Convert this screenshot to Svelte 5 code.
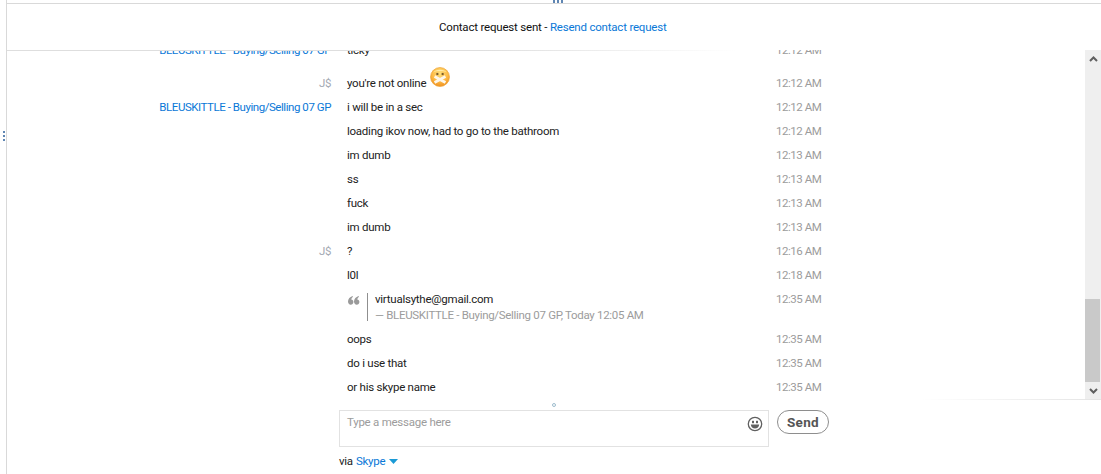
<script>
  const me = 'J$';
  const them = 'BLEUSKITTLE - Buying/Selling 07 GP';
  const rows = [
    { name: them, text: 'ticky', time: '12:12 AM', clip: true },
    { name: me, text: "you're not online", time: '12:12 AM', emo: true },
    { name: them, text: 'i will be in a sec', time: '12:12 AM' },
    { text: 'loading ikov now, had to go to the bathroom', time: '12:12 AM' },
    { text: 'im dumb', time: '12:13 AM' },
    { text: 'ss', time: '12:13 AM' },
    { text: 'fuck', time: '12:13 AM' },
    { text: 'im dumb', time: '12:13 AM' },
    { name: me, text: '?', time: '12:16 AM' },
    { text: 'l0l', time: '12:18 AM' },
    { quote: true, text: 'virtualsythe@gmail.com', by: '— BLEUSKITTLE - Buying/Selling 07 GP, Today 12:05 AM', time: '12:35 AM' },
    { text: 'oops', time: '12:35 AM' },
    { text: 'do i use that', time: '12:35 AM' },
    { text: 'or his skype name', time: '12:35 AM' }
  ];
</script>

<div class="window">
  <div class="grip-left"><i></i><i></i><i></i></div>
  <div class="frame">
    <div class="grip-top"><i></i><i></i><i></i></div>
    <header class="notice">Contact request sent - <a href="#r">Resend contact request</a></header>
    <div class="history">
      <div class="fade-top"></div>
      <div class="list">
        {#each rows as r}
          <div class="row" class:emo-row={r.emo} class:quote-row={r.quote}>
            <div class="name" class:me={r.name === me}>{r.name ?? ''}</div>
            {#if r.quote}
              <div class="body quote">
                <svg class="qmark" width="12" height="9" viewBox="0 0 12 9"><path d="M4.5 0C2 1 0 2.8 0 5.6C0 7.6 1.2 8.8 2.7 8.8C4.2 8.8 5.4 7.6 5.4 6.1C5.4 4.7 4.5 3.7 3.2 3.6C3.4 2.4 4 1.4 5 0.7ZM10.5 0C8 1 6 2.8 6 5.6C6 7.6 7.2 8.8 8.7 8.8C10.2 8.8 11.4 7.6 11.4 6.1C11.4 4.7 10.5 3.7 9.2 3.6C9.4 2.4 10 1.4 11 0.7Z" fill="#9a9a9a"/></svg>
                <div class="qtext">
                  <div class="qline">{r.text}</div>
                  <div class="by">{r.by}</div>
                </div>
              </div>
            {:else}
              <div class="body">{r.text}{#if r.emo}<svg class="emo" width="20" height="20" viewBox="0 0 22 22">
                <defs>
                  <radialGradient id="face" cx="50%" cy="30%" r="70%"><stop offset="0" stop-color="#ffdf7c"/><stop offset="0.6" stop-color="#fdbb45"/><stop offset="1" stop-color="#f0901f"/></radialGradient>
                </defs>
                <circle cx="11" cy="11" r="10.4" fill="url(#face)" stroke="#eda63a" stroke-width="0.8"/>
                <path d="M3.5 6C6 2 16 2 18.5 6C15 4 7 4 3.5 6Z" fill="#fff2b8" opacity="0.8"/>
                <rect x="7" y="6.5" width="2.2" height="2.4" fill="#7a5a28"/><rect x="12.8" y="6.5" width="2.2" height="2.4" fill="#7a5a28"/>
                <path d="M5 10.5L17 17M17 10.5L5 17" stroke="#fdf6ea" stroke-width="3"/>
              </svg>{/if}</div>
            {/if}
            <div class="time">{r.time}</div>
          </div>
        {/each}
      </div>
      <div class="scrollbar">
        <div class="arrow"><svg width="9" height="6" viewBox="0 0 9 6"><path d="M1 5L4.5 1.5L8 5" fill="none" stroke="#5f5f5f" stroke-width="2"/></svg></div>
        <div class="track"><div class="thumb"></div></div>
        <div class="arrow"><svg width="9" height="6" viewBox="0 0 9 6"><path d="M1 1L4.5 4.5L8 1" fill="none" stroke="#5f5f5f" stroke-width="2"/></svg></div>
      </div>
      <div class="fade-bottom"></div>
    </div>
    <div class="resize-row"><span class="dot"></span></div>
    <div class="composer">
      <div class="input">
        <span class="placeholder">Type a message here</span>
        <svg class="smile" width="16" height="16" viewBox="0 0 16 16">
          <circle cx="8" cy="8" r="6.7" fill="none" stroke="#606060" stroke-width="1.3"/>
          <rect x="5" y="4.8" width="2" height="2.4" fill="#606060"/><rect x="9" y="4.8" width="2" height="2.4" fill="#606060"/>
          <path d="M3.8 8.6H12.2C12 11.2 10.2 12.6 8 12.6C5.8 12.6 4 11.2 3.8 8.6Z" fill="#606060"/>
        </svg>
      </div>
      <button class="send">Send</button>
    </div>
    <div class="via">via <a href="#s">Skype</a><svg class="caret" width="9" height="5" viewBox="0 0 9 5"><path d="M0 0H9L4.5 5Z" fill="#1a9ad6"/></svg></div>
  </div>
</div>

<style>
  :global(body) { margin: 0; background: #fff; }
  .window {
    width: 1101px; height: 474px; position: relative; overflow: hidden;
    font-family: Roboto, sans-serif; font-size: 11.5px; letter-spacing: -0.25px; color: #222; background: #fff;
  }
  a { color: #0a78d7; text-decoration: none; }
  .grip-left { position: absolute; left: 3px; top: 131px; display: flex; flex-direction: column; gap: 2px; }
  .grip-left i { width: 2px; height: 2px; background: #5f86b3; display: block; }
  .grip-top { position: absolute; left: 553px; top: 0; display: flex; gap: 2px; }
  .grip-top i { width: 2px; height: 3px; background: #5f86b3; display: block; }
  .frame {
    margin-left: 6px; height: 474px; padding-top: 3px; box-sizing: border-box;
    display: flex; flex-direction: column;
  }
  .frame { border-left: 1px solid #d9d9d9; }
  .frame::before { content: ""; display: block; height: 1px; background: #d9d9d9; flex: none; }
  .notice { height: 46px; flex: none; padding-left: 432px; line-height: 47px; color: #111; box-sizing: border-box; letter-spacing: -0.2px; }
  .history { height: 350px; flex: none; position: relative; overflow: hidden; }
  .fade-top { position: absolute; left: 0; top: 0; width: 730px; height: 1px; background: linear-gradient(90deg, #dedede 0, #dedede 65%, #fff); z-index: 1; }
  .fade-bottom { position: absolute; right: 0; bottom: 0; width: 180px; height: 1px; background: linear-gradient(90deg, #fff, #e4e4e4); }
  .list { margin-top: -12px; }
  .row { display: grid; grid-template-columns: 324px 429px 80px; height: 24px; line-height: 24px; }
  .emo-row { height: 33px; padding-top: 9px; box-sizing: border-box; }
  .quote-row { height: 40px; }
  .name { text-align: right; color: #0a78d7; white-space: nowrap; letter-spacing: -0.45px; }
  .name.me { color: #a3a9b3; }
  .body { padding-left: 16px; white-space: nowrap; position: relative; color: #222; }
  .emo { margin: -4px 0 0 4px; vertical-align: top; }
  .time { color: #9c9c9c; margin-left: 16px; white-space: nowrap; letter-spacing: -0.45px; }
  .quote { display: flex; align-items: flex-start; }
  .qmark { margin-top: 9px; margin-left: 1px; flex: none; }
  .qtext { margin: 6px 0 0 7px; border-left: 1px solid #8f8f8f; padding-left: 7px; line-height: 16px; height: 28px; }
  .qline { margin-top: -2px; }
  .by { color: #9c9c9c; letter-spacing: -0.31px; }
  .scrollbar { position: absolute; right: 0; top: 0; bottom: 1px; width: 16px; background: #efefef; display: flex; flex-direction: column; }
  .arrow { height: 17px; display: flex; align-items: center; justify-content: center; flex: none; }
  .track { flex: 1; display: flex; flex-direction: column; justify-content: flex-end; }
  .thumb { height: 83px; width: 15px; background: #c9c9c9; }
  .resize-row { height: 10px; flex: none; position: relative; }
  .dot { position: absolute; left: 545px; top: 3px; width: 4px; height: 4px; border: 1px solid #9dbccd; border-radius: 50%; box-sizing: border-box; }
  .composer { display: flex; align-items: flex-start; padding-left: 332px; gap: 8px; flex: none; }
  .input { width: 430px; height: 37px; border: 1px solid #e2e2e2; box-sizing: border-box; position: relative; padding: 3px 7px; line-height: 17px; }
  .placeholder { color: #9c9c9c; }
  .smile { position: absolute; right: 5px; top: 5px; }
  .send { width: 52px; height: 24px; border: 1px solid #8e8e8e; border-radius: 12px; background: #fff; font: 700 13.5px Roboto, sans-serif; color: #555; padding: 0; margin: 0; letter-spacing: 0.3px; }
  .via { margin-top: 6px; padding-left: 332px; line-height: 17px; color: #222; display: flex; gap: 3px; align-items: center; }
  .caret { margin-left: 1px; }
</style>
